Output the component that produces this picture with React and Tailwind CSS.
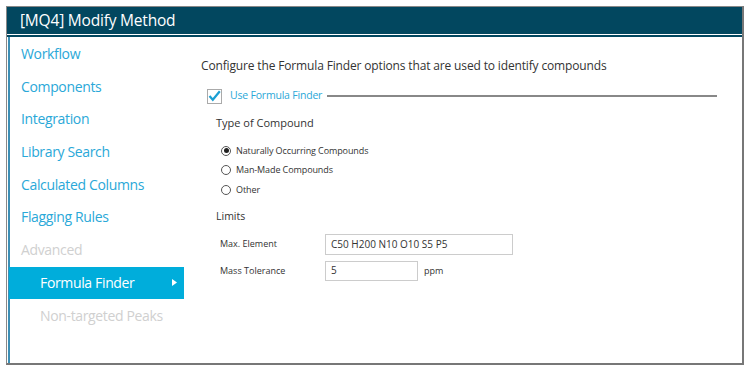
import React from 'react';

const navItems = [
    { label: 'Workflow' },
    { label: 'Components' },
    { label: 'Integration' },
    { label: 'Library Search' },
    { label: 'Calculated Columns' },
    { label: 'Flagging Rules' },
    { label: 'Advanced', disabled: true },
    { label: 'Formula Finder', sub: true, active: true },
    { label: 'Non-targeted Peaks', sub: true, disabled: true },
];

function NavItem({ item }) {
    if (item.active) {
        return (
            <div className="h-[32px] mt-[1px] bg-[#00addb] text-white flex items-center justify-between pl-[31px] pr-[6px] -ml-[1px]">
                <span>{item.label}</span>
                <svg width="6" height="7" viewBox="0 0 6 7"><path d="M0 0 L5 3.5 L0 7 Z" fill="white" /></svg>
            </div>
        );
    }
    return (
        <div className={`h-[32.7px] flex items-center ${item.sub ? 'pl-[30px]' : 'pl-[11px]'} ${item.disabled ? 'text-[#d0d0d0]' : 'text-[#2aa8d8]'}`}>
            {item.label}
        </div>
    );
}

function Radio({ checked, label }) {
    return (
        <div className="flex items-center h-[19.5px]">
            <span className="w-[10px] h-[10px] rounded-full border border-[#555] bg-white flex items-center justify-center mr-[5px]">
                {checked && <span className="w-[5px] h-[5px] rounded-full bg-[#222]" />}
            </span>
            <span>{label}</span>
        </div>
    );
}

export default function App() {
    return (
        <div className="w-[750px] h-[371px] bg-white pt-[6px] pl-[6px]" style={{ fontFamily: '"Open Sans", "Noto Sans", sans-serif' }}>
            <div className="w-[738px] h-[359px] border-l border-t border-[#888] border-r-2 border-b-2 border-r-[#777] border-b-[#777] flex flex-col">
                <div className="h-[27px] bg-[#02475f] text-white text-[15.5px] tracking-[-0.2px] flex items-center pl-[13px] shrink-0">
                    [MQ4] Modify Method
                </div>
                <div className="h-[1px] bg-white shrink-0" />
                <div className="h-[2px] bg-[#02475f] shrink-0" />
                <div className="flex flex-1 min-h-0">
                    <div className="w-[176px] border-l-2 border-[#3c8fb5] ml-[1px] text-[14px] tracking-[-0.35px]">
                        {navItems.map((item) => (
                            <NavItem key={item.label} item={item} />
                        ))}
                    </div>
                    <div className="flex-1 pl-[17px] pt-[19px] text-[#333]">
                        <div className="text-[12px] tracking-[-0.15px] leading-[20px]">
                            Configure the Formula Finder options that are used to identify compounds
                        </div>
                        <div className="flex items-center mt-[12px] ml-[6px] h-[16px]">
                            <span className="w-[15px] h-[15px] border border-[#aaa] bg-white flex items-center justify-center">
                                <svg width="13" height="12" viewBox="0 0 13 12"><path d="M1.5 6 L4.8 9.8 L11.8 1.2" fill="none" stroke="#1a9fd3" strokeWidth="2.2" /></svg>
                            </span>
                            <span className="ml-[8px] text-[10.5px] tracking-[-0.2px] text-[#2aa8d8]">Use Formula Finder</span>
                            <span className="ml-[5px] w-[390px] h-[2px] bg-[#888]" />
                        </div>
                        <div className="ml-[15px] mt-[11px] text-[11px] leading-[16px]">Type of Compound</div>
                        <div className="ml-[20px] mt-[10px] text-[9px] leading-[14px] tracking-[-0.1px]">
                            <Radio checked label="Naturally Occurring Compounds" />
                            <Radio label="Man-Made Compounds" />
                            <Radio label="Other" />
                        </div>
                        <div className="ml-[15px] mt-[8px] text-[10.5px] leading-[16px]">Limits</div>
                        <div className="ml-[19px] mt-[10px] text-[9px]">
                            <div className="flex items-center h-[21px]">
                                <span className="w-[105px]">Max. Element</span>
                                <div className="w-[188px] h-[21px] border border-[#ccc] flex items-center px-[5px] text-[10px]">C50 H200 N10 O10 S5 P5</div>
                            </div>
                            <div className="flex items-center h-[20px] mt-[6px]">
                                <span className="w-[105px]">Mass Tolerance</span>
                                <div className="w-[93px] h-[20px] border border-[#ccc] flex items-center px-[5px] text-[10px]">5</div>
                                <span className="ml-[6px]">ppm</span>
                            </div>
                        </div>
                    </div>
                </div>
            </div>
        </div>
    );
}
